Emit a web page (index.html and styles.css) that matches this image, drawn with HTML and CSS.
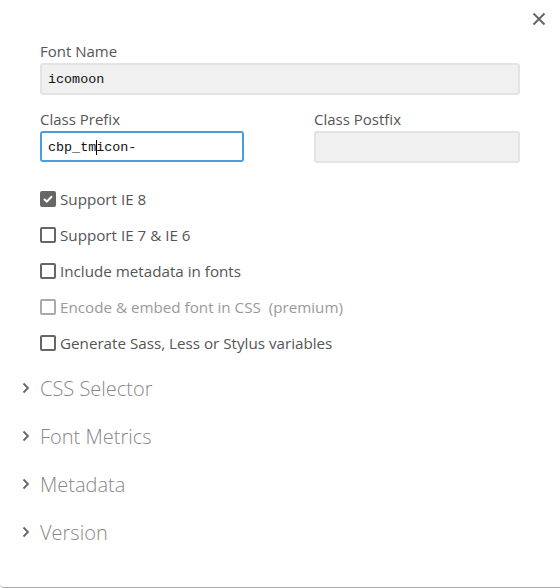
FILE: index.html
```html
<!DOCTYPE html>
<html>
<head>
<meta charset="utf-8">
<link rel="stylesheet" href="styles.css">
</head>
<body>
<div class="dialog">
  <button class="close" aria-label="Close">
    <svg width="14" height="14" viewBox="0 0 14 14"><path d="M1.5 1.5 L12.5 12.5 M12.5 1.5 L1.5 12.5" stroke="#666" stroke-width="2" fill="none"/></svg>
  </button>
  <div class="form">
    <div class="field">
      <label class="label">Font Name</label>
      <div class="input readonly">icomoon</div>
    </div>
    <div class="row">
      <div class="field prefix">
        <label class="label">Class Prefix</label>
        <div class="input focused">cbp_tm<span class="caret"></span>icon-</div>
      </div>
      <div class="field postfix">
        <label class="label">Class Postfix</label>
        <div class="input readonly"></div>
      </div>
    </div>
    <ul class="checks">
      <li class="check"><span class="box checked"><svg width="10" height="8" viewBox="0 0 10 8"><path d="M1 4 L3.8 6.6 L9 1.2" stroke="#fff" stroke-width="2" fill="none"/></svg></span>Support IE 8</li>
      <li class="check"><span class="box"></span>Support IE 7 &amp; IE 6</li>
      <li class="check"><span class="box"></span>Include metadata in fonts</li>
      <li class="check disabled"><span class="box"></span>Encode &amp; embed font in CSS&nbsp; (premium)</li>
      <li class="check"><span class="box"></span>Generate Sass, Less or Stylus variables</li>
    </ul>
  </div>
  <ul class="sections">
    <li class="section"><svg class="chev" width="8" height="12" viewBox="0 0 8 12"><path d="M1.5 1.5 L6 6 L1.5 10.5" stroke="#666" stroke-width="1.8" fill="none"/></svg>CSS Selector</li>
    <li class="section"><svg class="chev" width="8" height="12" viewBox="0 0 8 12"><path d="M1.5 1.5 L6 6 L1.5 10.5" stroke="#666" stroke-width="1.8" fill="none"/></svg>Font Metrics</li>
    <li class="section"><svg class="chev" width="8" height="12" viewBox="0 0 8 12"><path d="M1.5 1.5 L6 6 L1.5 10.5" stroke="#666" stroke-width="1.8" fill="none"/></svg>Metadata</li>
    <li class="section"><svg class="chev" width="8" height="12" viewBox="0 0 8 12"><path d="M1.5 1.5 L6 6 L1.5 10.5" stroke="#666" stroke-width="1.8" fill="none"/></svg>Version</li>
  </ul>
</div>
</body>
</html>
```
FILE: styles.css
```css
html, body {
  margin: 0;
  padding: 0;
  background: #fff;
}
body {
  font-family: "Open Sans", "Noto Sans", sans-serif;
  color: #555;
}
.dialog {
  position: relative;
  box-sizing: border-box;
  width: 560px;
  height: 588px;
  background: #fff;
  border-bottom: 1px solid #a9a9a9;
  border-bottom-left-radius: 4px;
  padding-top: 41px;
}
.close {
  position: absolute;
  top: 12px;
  right: 14px;
  width: 14px;
  height: 14px;
  padding: 0;
  border: 0;
  background: none;
  display: flex;
}
.form {
  padding: 0 40px;
}
.field {
  display: flex;
  flex-direction: column;
}
.label {
  font-size: 15px;
  line-height: 20px;
  height: 20px;
  margin-bottom: 2px;
  color: #555;
}
.input {
  box-sizing: border-box;
  height: 32px;
  border: 2px solid #e3e3e3;
  border-radius: 3px;
  background: #f0f0f0;
  padding: 2px 6px 0;
  font-family: "Liberation Mono", "DejaVu Sans Mono", monospace;
  font-size: 13.4px;
  line-height: 26px;
  color: #111;
  display: flex;
  align-items: center;
}
.input.focused {
  background: #fff;
  border-color: #4a9ede;
  height: 31px;
}
.caret {
  display: inline-block;
  width: 1px;
  height: 15px;
  background: #000;
  margin-right: -1px;
}
.row {
  display: flex;
  gap: 70px;
  margin-top: 14px;
}
.prefix {
  width: 204px;
}
.postfix {
  width: 206px;
}
.checks {
  list-style: none;
  margin: 18px 0 0;
  padding: 0;
}
.check {
  height: 36px;
  display: flex;
  align-items: center;
  font-size: 15.2px;
  color: #555;
}
.box {
  box-sizing: border-box;
  width: 16px;
  height: 16px;
  border: 2px solid #666;
  border-radius: 2px;
  margin-right: 4px;
  display: flex;
  align-items: center;
  justify-content: center;
}
.box.checked {
  background: #666;
}
.check.disabled {
  color: #999;
}
.check.disabled .box {
  border-color: #aaa;
}
.sections {
  list-style: none;
  margin: 3px 0 0;
  padding: 0 0 0 22px;
}
.section {
  height: 48px;
  display: flex;
  align-items: center;
  font-size: 20px;
  font-weight: 300;
  color: #888;
}
.chev {
  margin-right: 10px;
}
```
